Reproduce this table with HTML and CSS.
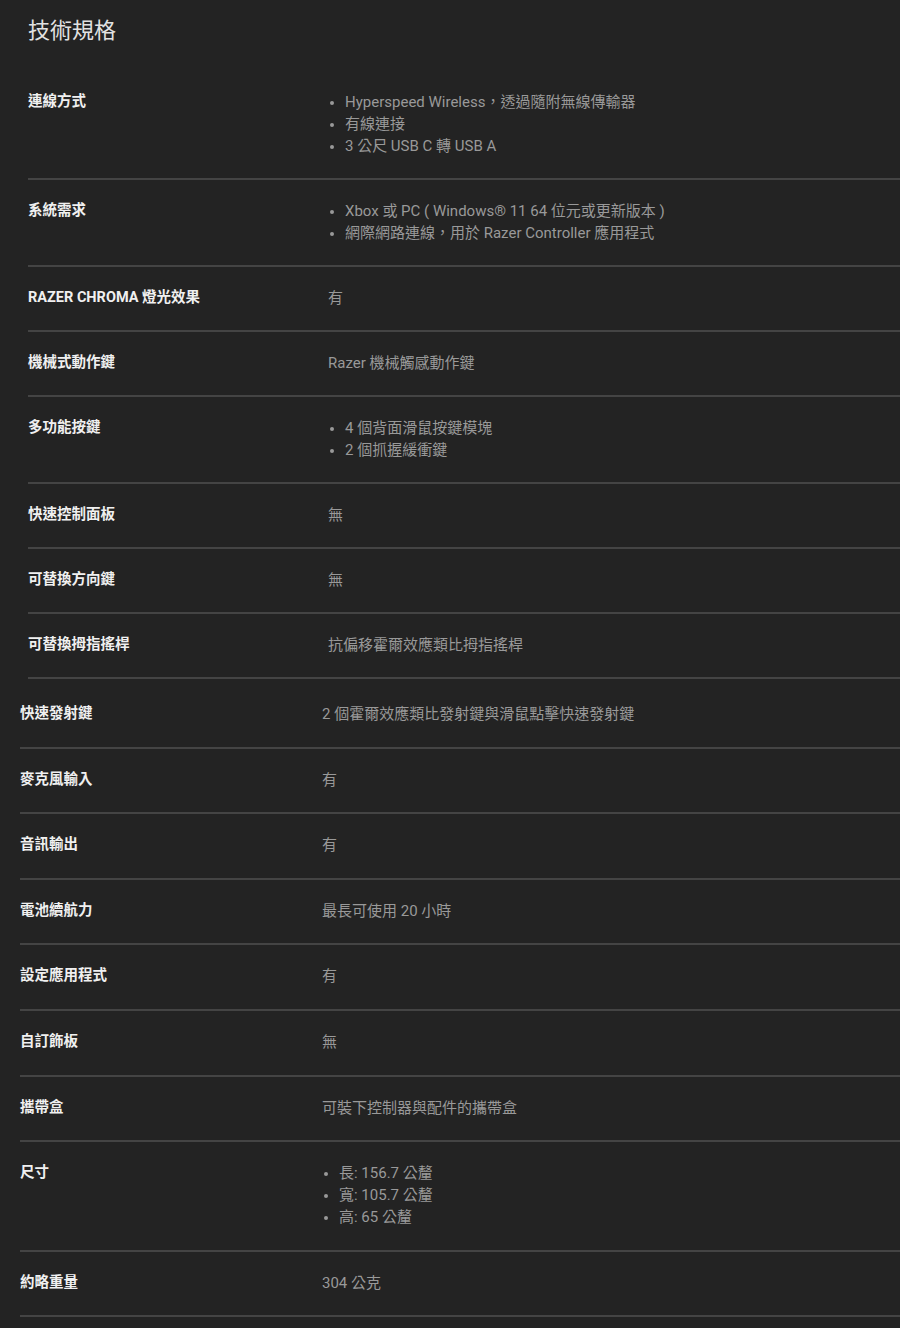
FILE: index.html
```html
<!DOCTYPE html>
<html lang="zh-Hant">
<head>
  <meta charset="UTF-8">
  <meta name="viewport" content="width=device-width, initial-scale=1.0">
  <title>技術規格</title>
  <link rel="stylesheet" href="styles.css">
</head>
<body>
  <div class="specs">
    <h2 class="specs-title">技術規格</h2>

    <!-- Controller specs -->
    <div class="spec-group group-main">
      <div class="spec-row">
        <div class="spec-label">連線方式</div>
        <div class="spec-value">
          <ul>
            <li>Hyperspeed Wireless，透過隨附無線傳輸器</li>
            <li>有線連接</li>
            <li>3 公尺 USB C 轉 USB A</li>
          </ul>
        </div>
      </div>
      <div class="spec-row">
        <div class="spec-label">系統需求</div>
        <div class="spec-value">
          <ul>
            <li>Xbox 或 PC ( Windows® 11 64 位元或更新版本 )</li>
            <li>網際網路連線，用於 Razer Controller 應用程式</li>
          </ul>
        </div>
      </div>
      <div class="spec-row">
        <div class="spec-label">RAZER CHROMA 燈光效果</div>
        <div class="spec-value">有</div>
      </div>
      <div class="spec-row">
        <div class="spec-label">機械式動作鍵</div>
        <div class="spec-value">Razer 機械觸感動作鍵</div>
      </div>
      <div class="spec-row">
        <div class="spec-label">多功能按鍵</div>
        <div class="spec-value">
          <ul>
            <li>4 個背面滑鼠按鍵模塊</li>
            <li>2 個抓握緩衝鍵</li>
          </ul>
        </div>
      </div>
      <div class="spec-row">
        <div class="spec-label">快速控制面板</div>
        <div class="spec-value">無</div>
      </div>
      <div class="spec-row">
        <div class="spec-label">可替換方向鍵</div>
        <div class="spec-value">無</div>
      </div>
      <div class="spec-row">
        <div class="spec-label">可替換拇指搖桿</div>
        <div class="spec-value">抗偏移霍爾效應類比拇指搖桿</div>
      </div>
    </div>

    <!-- Extra specs -->
    <div class="spec-group group-extra">
      <div class="spec-row">
        <div class="spec-label">快速發射鍵</div>
        <div class="spec-value">2 個霍爾效應類比發射鍵與滑鼠點擊快速發射鍵</div>
      </div>
      <div class="spec-row">
        <div class="spec-label">麥克風輸入</div>
        <div class="spec-value">有</div>
      </div>
      <div class="spec-row">
        <div class="spec-label">音訊輸出</div>
        <div class="spec-value">有</div>
      </div>
      <div class="spec-row">
        <div class="spec-label">電池續航力</div>
        <div class="spec-value">最長可使用 20 小時</div>
      </div>
      <div class="spec-row">
        <div class="spec-label">設定應用程式</div>
        <div class="spec-value">有</div>
      </div>
      <div class="spec-row">
        <div class="spec-label">自訂飾板</div>
        <div class="spec-value">無</div>
      </div>
      <div class="spec-row">
        <div class="spec-label">攜帶盒</div>
        <div class="spec-value">可裝下控制器與配件的攜帶盒</div>
      </div>
      <div class="spec-row">
        <div class="spec-label">尺寸</div>
        <div class="spec-value">
          <ul>
            <li>長: 156.7 公釐</li>
            <li>寬: 105.7 公釐</li>
            <li>高: 65 公釐</li>
          </ul>
        </div>
      </div>
      <div class="spec-row">
        <div class="spec-label">約略重量</div>
        <div class="spec-value">304 公克</div>
      </div>
    </div>
  </div>
</body>
</html>
```

FILE: styles.css
```css
body {
  margin: 0;
  background-color: #232323;
  font-family: 'Roboto', 'Noto Sans CJK TC', sans-serif;
  color: #999;
}
.specs {
  padding-top: 16px;
}
.specs-title {
  margin: 0 0 25px 28px;
  font-size: 22px;
  line-height: 30px;
  font-weight: normal;
  color: #e2e2e2;
}
.spec-group.group-main {
  margin-left: 28px;
}
.spec-group.group-extra {
  margin-left: 20px;
  padding-top: 4px;
}
.spec-row {
  display: grid;
  grid-template-columns: 300px 1fr;
  padding: 20px 0 21px;
  border-bottom: 2px solid #444;
  font-size: 15px;
  line-height: 22px;
}
.group-extra .spec-row {
  grid-template-columns: 302px 1fr;
  padding-bottom: 21.6px;
}
.spec-label {
  font-weight: bold;
  font-size: 14.5px;
  color: #f0f0f0;
}
.spec-value {
  color: #999;
}
.spec-value ul {
  margin: 0;
  padding-left: 17px;
}
.spec-value li::marker {
  font-size: 13px;
}
```
